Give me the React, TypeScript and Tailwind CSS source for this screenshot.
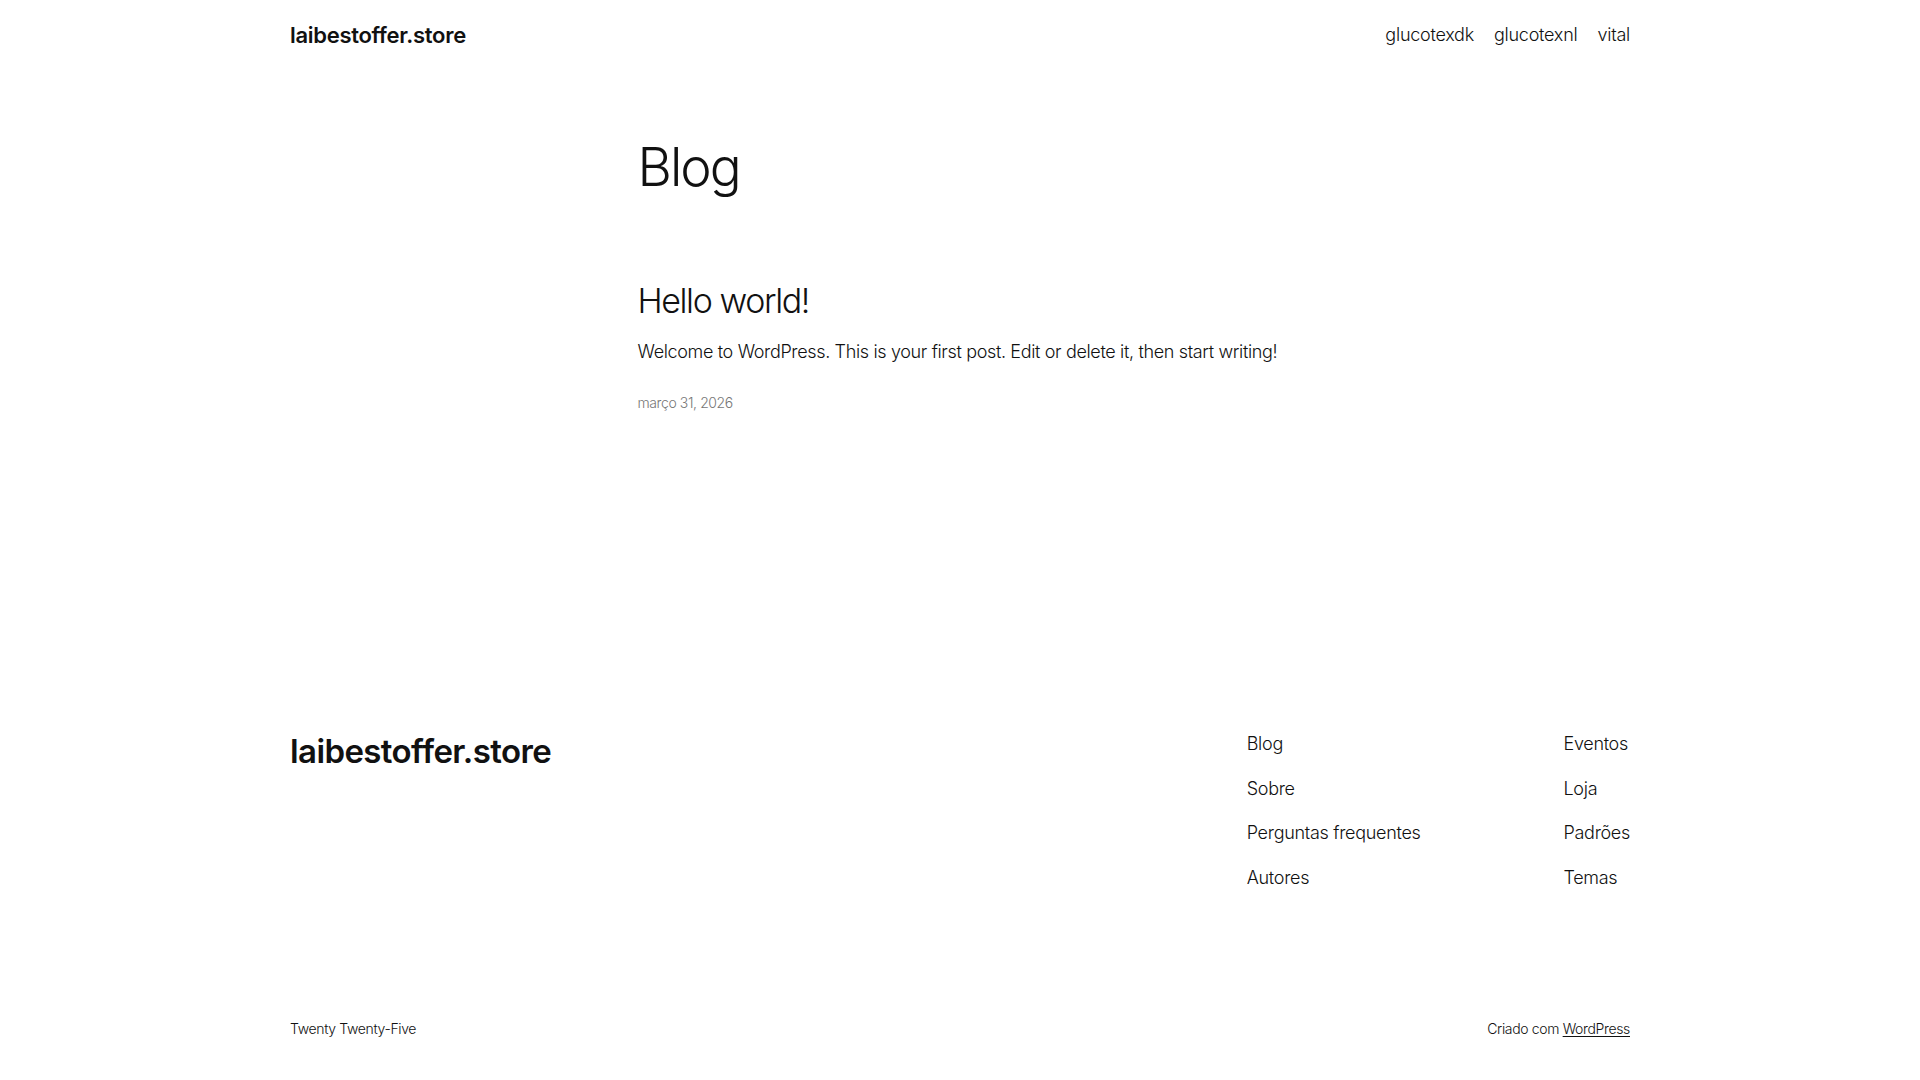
import React from "react";

export default function App() {
  return (
    <div className="min-h-screen bg-white text-[#111111] font-['Inter',sans-serif] font-light">
      <header className="mx-auto flex h-[68px] w-[1340px] items-center justify-between">
        <a className="mt-[2px] text-[22px] font-semibold tracking-[-0.3px] text-[#111]">laibestoffer.store</a>
        <nav className="flex items-center gap-[20px] text-[18px] tracking-[-0.25px]">
          <a>glucotexdk</a>
          <a>glucotexnl</a>
          <a>vital</a>
        </nav>
      </header>

      <main className="mx-auto w-[645px]">
        <h1 className="mt-[66px] text-[53px] font-light leading-[67px] tracking-[-2px]">Blog</h1>
        <article className="mt-[77px]">
          <h2 className="text-[34px] font-light leading-[46px] tracking-[-1.4px]">Hello world!</h2>
          <p className="mt-[13px] text-[18px] leading-[29px] tracking-[-0.35px]">
            Welcome to WordPress. This is your first post. Edit or delete it, then start writing!
          </p>
          <p className="mt-[27px] text-[14px] leading-[20px] tracking-[-0.4px] text-[#777]">março 31, 2026</p>
        </article>
      </main>

      <footer className="mx-auto mt-[317px] w-[1340px]">
        <div className="flex items-start justify-between">
          <a className="mt-[1px] text-[33px] font-semibold leading-[40px] tracking-[-0.6px]">laibestoffer.store</a>
          <div className="flex gap-[143px] text-[18px] leading-[28px] tracking-[-0.3px]">
            <ul className="flex flex-col gap-[16.5px]">
              <li>Blog</li>
              <li>Sobre</li>
              <li>Perguntas frequentes</li>
              <li>Autores</li>
            </ul>
            <ul className="flex flex-col gap-[16.5px]">
              <li>Eventos</li>
              <li>Loja</li>
              <li>Padrões</li>
              <li>Temas</li>
            </ul>
          </div>
        </div>
        <div className="mt-[127px] flex items-center justify-between pb-[40px] text-[14px] leading-[20px] tracking-[-0.35px]">
          <span>Twenty Twenty-Five</span>
          <span>
            Criado com <a className="underline underline-offset-2">WordPress</a>
          </span>
        </div>
      </footer>
    </div>
  );
}
